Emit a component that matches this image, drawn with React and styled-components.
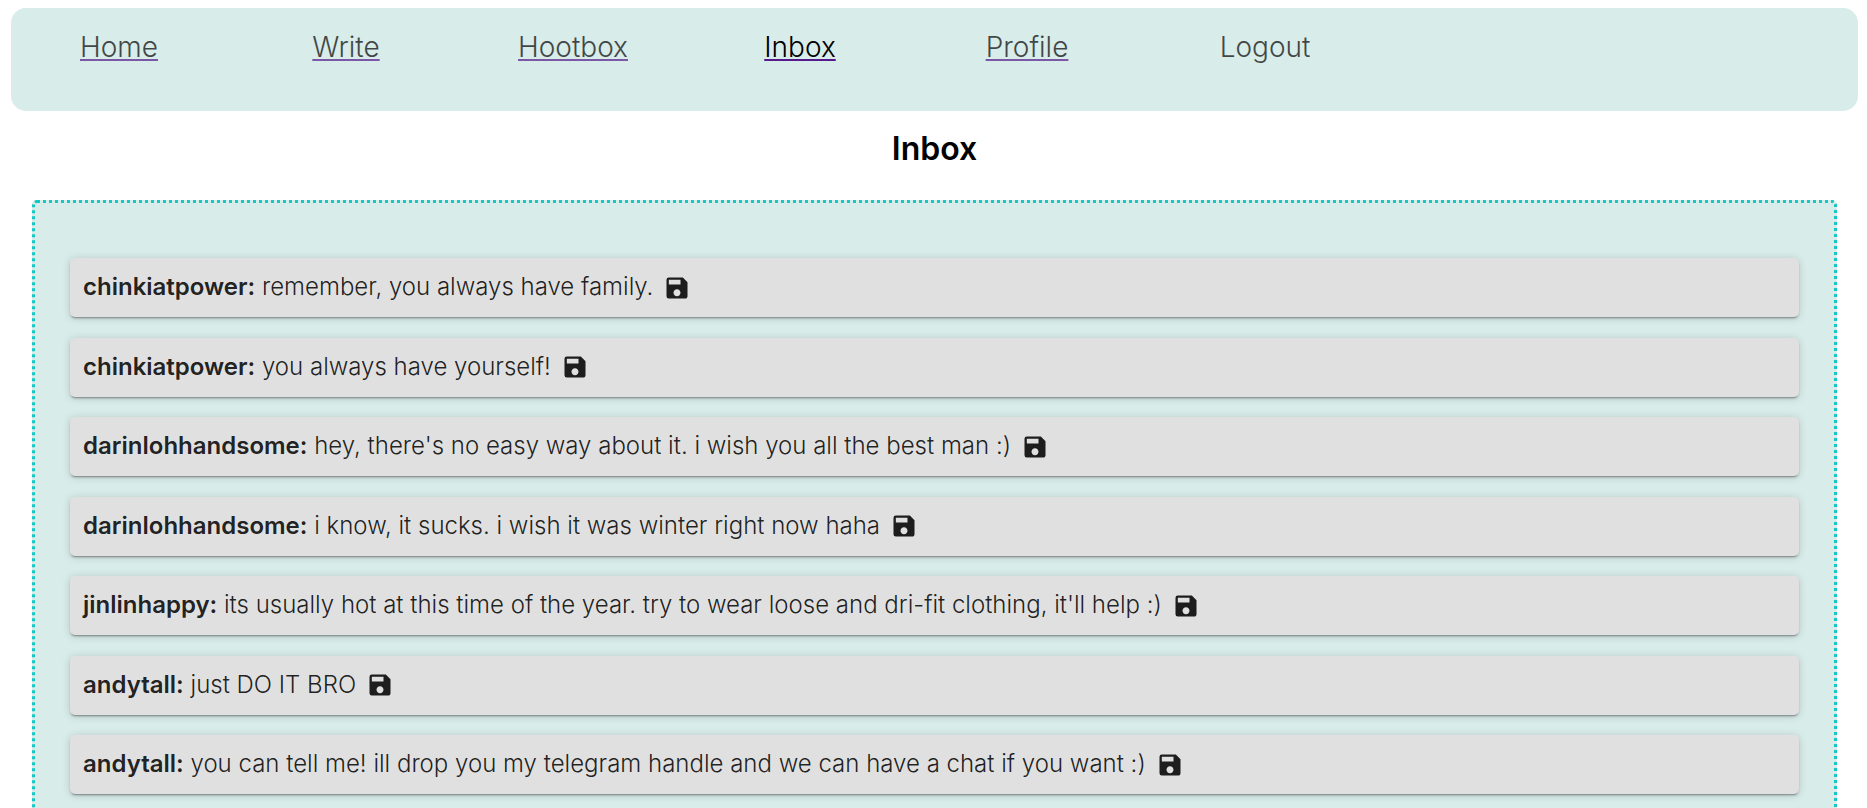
import React from "react";
import styled, { createGlobalStyle } from "styled-components";
import { MdSave } from "react-icons/md";

const GlobalStyle = createGlobalStyle`
  *, *::before, *::after { box-sizing: border-box; }
  body {
    margin: 0;
    background: #fff;
    color: #000;
    font-family: Inter, "Open Sans", sans-serif;
    font-weight: 300;
  }
`;

const Page = styled.div`
  padding: 8px 9px 0 11px;
`;

const NavBar = styled.nav`
  display: flex;
  align-items: flex-start;
  gap: 11px;
  min-height: 103px;
  padding-top: 17px;
  border-radius: 15px;
  background: #d8ecea;
`;

const NavTab = styled.div`
  flex: 0 1 216px;
  text-align: center;
  font-size: 28px;
  line-height: 44px;
  opacity: ${({ $active }) => ($active ? 1 : 0.7)};
`;

const NavLink = styled.a`
  color: #551a8b;
  text-decoration: underline;
  text-decoration-thickness: 2px;
  text-underline-offset: 2px;
  text-decoration-skip-ink: none;
`;

const NavLabel = styled.span`
  color: #000;
`;

const LogoutTab = styled(NavTab)`
  margin-left: 11px;
`;

const LogoutButton = styled.button`
  padding: 0;
  border: 0;
  background: none;
  color: #000;
  font: inherit;
  cursor: pointer;
`;

const Title = styled.h1`
  margin: 15px 0 29px;
  text-align: center;
  font-size: 32px;
  font-weight: 600;
  line-height: 45px;
`;

const Panel = styled.main`
  margin: 0 21px;
  padding: 55px 35px;
  border: 3px dotted #16c7c3;
  border-radius: 5px;
  background: #d8ecea;
`;

const MessageList = styled.ul`
  display: flex;
  flex-direction: column;
  gap: 1.1vw;
  margin: 0;
  padding: 0;
  list-style: none;
`;

const MessageCard = styled.li`
  display: flex;
  align-items: center;
  gap: 10px;
  min-height: 59px;
  padding: 0 13px;
  border-radius: 5px;
  background: #e0e0e0;
  color: rgba(0, 0, 0, 0.87);
  box-shadow:
    0 3px 1px -2px rgba(0, 0, 0, 0.2),
    0 2px 2px 0 rgba(0, 0, 0, 0.14),
    0 1px 8px 0 rgba(0, 0, 0, 0.16);
`;

const MessageText = styled.p`
  margin: 0;
  padding-bottom: 1px;
  font-size: 24px;
  line-height: 32px;
`;

const Sender = styled.strong`
  font-weight: 600;
`;

const SaveButton = styled.button`
  display: flex;
  flex: none;
  padding: 0;
  border: 0;
  background: none;
  color: inherit;
  font-size: 28px;
  cursor: pointer;
`;

const tabs = ["Home", "Write", "Hootbox", "Inbox", "Profile"];

const messages = [
  { from: "chinkiatpower", text: "remember, you always have family." },
  { from: "chinkiatpower", text: "you always have yourself!" },
  { from: "darinlohhandsome", text: "hey, there's no easy way about it. i wish you all the best man :)" },
  { from: "darinlohhandsome", text: "i know, it sucks. i wish it was winter right now haha" },
  { from: "jinlinhappy", text: "its usually hot at this time of the year. try to wear loose and dri-fit clothing, it'll help :)" },
  { from: "andytall", text: "just DO IT BRO" },
  { from: "andytall", text: "you can tell me! ill drop you my telegram handle and we can have a chat if you want :)" },
];

export default function App() {
  return (
    <>
      <GlobalStyle />
      <Page>
        <NavBar>
          {tabs.map((tab) => (
            <NavTab key={tab} $active={tab === "Inbox"}>
              <NavLink href={`#${tab.toLowerCase()}`} aria-current={tab === "Inbox" ? "page" : undefined}>
                <NavLabel>{tab}</NavLabel>
              </NavLink>
            </NavTab>
          ))}
          <LogoutTab>
            <LogoutButton type="button">Logout</LogoutButton>
          </LogoutTab>
        </NavBar>
        <Title>Inbox</Title>
        <Panel>
          <MessageList>
            {messages.map((message) => (
              <MessageCard key={message.text}>
                <MessageText>
                  <Sender>{message.from}:</Sender> {message.text}
                </MessageText>
                <SaveButton type="button" aria-label="Save message">
                  <MdSave />
                </SaveButton>
              </MessageCard>
            ))}
          </MessageList>
        </Panel>
      </Page>
    </>
  );
}
